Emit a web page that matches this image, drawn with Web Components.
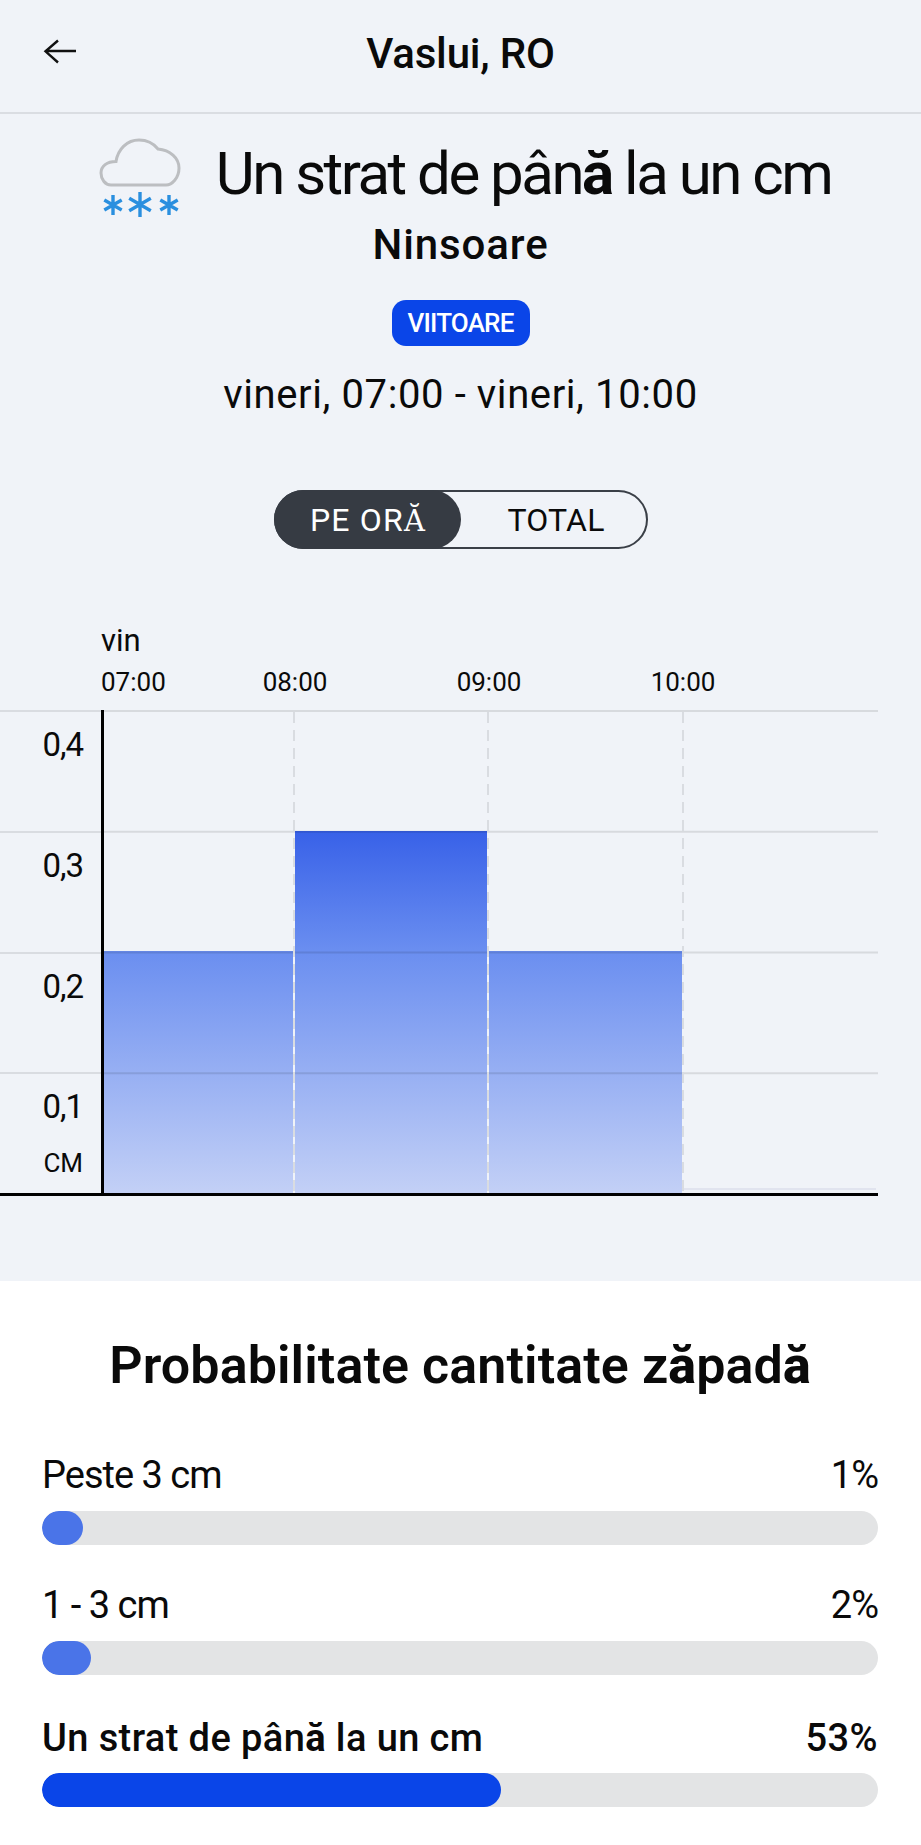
<!doctype html>
<html lang="ro">
<head>
<meta charset="utf-8">
<title>Vaslui, RO</title>
<style>
  html, body { margin: 0; padding: 0; }
  body { background: #f0f3f8; color: #0a0a0a; font-family: Roboto, "Liberation Sans", sans-serif; }
</style>
</head>
<body>
<weather-page>
  <app-header>Vaslui, RO</app-header>
  <alert-summary></alert-summary>
  <mode-toggle></mode-toggle>
  <snow-chart></snow-chart>
  <chance-panel>
    <chance-row label="Peste 3 cm" value="1%" fill="41"></chance-row>
    <chance-row label="1 - 3 cm" value="2%" fill="49"></chance-row>
    <chance-row label="Un strat de pân|ă| la un cm" value="53%" fill="459" active></chance-row>
  </chance-panel>
</weather-page>

<script>
(function () {
'use strict';

const makeTemplate = function (html) {
    let template = document.createElement('template');
    template.innerHTML = html;
    return template;
};

class ShadowBase extends HTMLElement {
    constructor() {
        super();
        this.attachShadow({ mode: 'open' }).appendChild(document.importNode(this.constructor.template.content, true));
    }
}

class WeatherPage extends ShadowBase {
    static get template() {
        return makeTemplate(`<style>
            :host{ display: flex; flex-direction: column; width: 100%; min-height: 1845px; }
        </style><slot></slot>`);
    }
}

class AppHeader extends ShadowBase {
    static get template() {
        return makeTemplate(`<style>
            :host{
                display: flex;
                align-items: center;
                justify-content: center;
                position: relative;
                box-sizing: border-box;
                height: 114px;
                padding-bottom: 6px;
                border-bottom: 2px solid #dadde2;
                font-size: 42px;
                font-weight: 500;
                letter-spacing: -0.2px;
            }
            svg{ position: absolute; left: 43px; top: 39px; }
        </style>
        <svg width="34" height="25" viewBox="0 0 34 25" fill="none" stroke="#111" stroke-width="2.4">
            <path d="M33 12H3M15 1.500L2.500 12.300L15 23.500"/>
        </svg>
        <slot></slot>`);
    }
}

class AlertSummary extends ShadowBase {
    static get template() {
        return makeTemplate(`<style>
            :host{ display: flex; flex-direction: column; align-items: center; padding-top: 22px; }
            .title{ display: flex; align-items: flex-start; gap: 35px; padding-left: 9px; }
            svg{ display: block; margin-top: 1px; }
            h1{ margin: 2px 0 0; font-size: 60px; line-height: 72px; font-weight: 400; letter-spacing: -2.5px; white-space: nowrap; }
            .fb{ font-weight: 700; }
            h2{ margin: 2px 0 0; font-size: 42px; line-height: 48px; font-weight: 500; letter-spacing: 0.9px; }
            .badge{
                margin-top: 31px;
                box-sizing: border-box;
                width: 138px;
                height: 46px;
                line-height: 46px;
                text-align: center;
                border-radius: 14px;
                background: #0a45e8;
                color: #fff;
                font-size: 26px;
                font-weight: 500;
                letter-spacing: -0.8px;
            }
            .dates{ margin-top: 25px; font-size: 40px; line-height: 48px; letter-spacing: 0.6px; }
        </style>
        <div class="title">
            <svg width="82" height="82" viewBox="0 0 82 82" fill="none">
                <path d="M12 48C6 48 2 42 2 36C2 29 8 24.500 17 24.500C19 12 28 3 40 3C49 3 55 7 59 12C71 13 80 21 80 31C80 41 73 48 67 48Z" stroke="#bcbec1" stroke-width="3"/>
                <g stroke="#2a8fdf" stroke-width="3.400">
                    <path d="M14 58V78M5.300 63L22.700 73M22.700 63L5.300 73"/>
                    <path d="M41 55V80M30.200 61.300L51.800 73.700M51.800 61.300L30.200 73.700"/>
                    <path d="M70 58V78M61.300 63L78.700 73M78.700 63L61.300 73"/>
                </g>
            </svg>
            <h1>Un strat de pân<span class="fb">ă</span> la un cm</h1>
        </div>
        <h2>Ninsoare</h2>
        <div class="badge">VIITOARE</div>
        <div class="dates">vineri, 07:00 - vineri, 10:00</div>`);
    }
}

class ModeToggle extends ShadowBase {
    static get template() {
        return makeTemplate(`<style>
            :host{
                display: flex;
                align-self: center;
                box-sizing: border-box;
                width: 374px;
                height: 59px;
                margin-top: 71px;
                border: 2px solid #3a3f47;
                border-radius: 30px;
                font-size: 32px;
                letter-spacing: 1.2px;
            }
            span{ display: flex; align-items: center; justify-content: center; flex: 0 0 50%; }
            .on{ margin: -2px 0 -2px -2px; padding-left: 2px; background: #363b43; color: #fff; border-radius: 30px; }
            .off{ padding-left: 6px; box-sizing: border-box; letter-spacing: 0.2px; }
            b{ font-weight: 400; }
            i{ font-style: normal; font-family: "DejaVu Serif", serif; font-size: 29px; }
        </style>
        <span class="on"><b>PE OR<i>Ă</i></b></span>
        <span class="off">TOTAL</span>`);
    }
}

class SnowChart extends ShadowBase {
    static get template() {
        return makeTemplate(`<style>
            :host{ display: block; width: 878px; margin-top: 74px; }
            .day{ padding-left: 101px; font-size: 31px; line-height: 36px; }
            .hours{
                display: grid;
                grid-template-columns: 194px 194px 194px;
                padding-left: 198px;
                margin: 7px 0 12px;
                position: relative;
                font-size: 26px;
                line-height: 32px;
                text-align: center;
            }
            .first{ position: absolute; left: 101px; top: 0; }
            .plot{ display: grid; grid-template-columns: 101px 777px; border-bottom: 3px solid #000; }
            .rows{ display: flex; flex-direction: column; }
            .row{
                box-sizing: border-box;
                height: 120.750px;
                padding: 15px 18px 0 0;
                border-top: 2px solid #d9dce1;
                text-align: right;
                font-size: 33px;
                letter-spacing: -1px;
                line-height: 36px;
            }
            .unit{ margin-top: 23px; font-size: 26px; line-height: 30px; letter-spacing: 0; }
            svg{ display: block; }
        </style>
        <div class="day">vin</div>
        <div class="hours"><span class="first">07:00</span><span>08:00</span><span>09:00</span><span>10:00</span></div>
        <div class="plot">
            <div class="rows">
                <div class="row">0,4</div>
                <div class="row">0,3</div>
                <div class="row">0,2</div>
                <div class="row">0,1<div class="unit">CM</div></div>
            </div>
            <svg width="777" height="483" viewBox="0 0 777 483">
                <defs>
                    <linearGradient id="snow" gradientUnits="userSpaceOnUse" x1="0" y1="121" x2="0" y2="483">
                        <stop offset="0" stop-color="#3861e8"/>
                        <stop offset="0.33" stop-color="#6a8ef0"/>
                        <stop offset="1" stop-color="#c3d0f6"/>
                    </linearGradient>
                </defs>
                <rect x="2" y="241" width="190" height="242" fill="url(#snow)"/>
                <rect x="194" y="121" width="192" height="362" fill="url(#snow)"/>
                <rect x="388" y="241" width="193" height="242" fill="url(#snow)"/>
                <path d="M582 479H775" stroke="#e1e4ef" stroke-width="2"/>
                <g stroke="#000" stroke-opacity="0.1" stroke-width="2">
                    <path d="M0 1H777M0 121.750H777M0 242.500H777M0 363.250H777"/>
                </g>
                <g stroke="#d9dce1" stroke-width="2" stroke-dasharray="11 7">
                    <path d="M193 2V483M387 2V483M582 2V483"/>
                </g>
                <path d="M1.500 0V483" stroke="#000" stroke-width="3"/>
            </svg>
        </div>`);
    }
}

class ChancePanel extends ShadowBase {
    static get template() {
        return makeTemplate(`<style>
            :host{ display: block; flex: 1 1 auto; margin-top: 85px; padding: 54px 43px 0 42px; background: #fff; }
            h2{ margin: 0 0 18px; text-align: center; font-size: 52px; line-height: 62px; font-weight: 600; letter-spacing: 0.1px; white-space: nowrap; }
            .fb{ font-weight: 800; }
        </style>
        <h2>Probabilitate cantitate z<span class="fb">ă</span>pad<span class="fb">ă</span></h2>
        <slot></slot>`);
    }
}

class ChanceRow extends ShadowBase {
    static get template() {
        return makeTemplate(`<style>
            :host{ display: block; padding-top: 38px; }
            .top{ display: flex; justify-content: space-between; font-size: 38px; letter-spacing: -1px; line-height: 44px; }
            .fb{ font-weight: 700; }
            .track{ height: 34px; margin-top: 14px; border-radius: 17px; background: #e3e4e5; overflow: hidden; }
            .fill{ height: 100%; border-radius: 17px; background: #4a74e8; }
            :host([active]){ padding-top: 41px; }
            :host([active]) .top{ font-weight: 500; letter-spacing: 0.4px; }
            :host([active]) .track{ margin-top: 13px; }
            :host([active]) .fill{ background: #0a45e8; }
        </style>
        <div class="top"><span class="label"></span><span class="value"></span></div>
        <div class="track"><div class="fill"></div></div>`);
    }
    connectedCallback() {
        let parts = this.getAttribute('label').split('|');
        let label = this.shadowRoot.querySelector('.label');
        parts.forEach(function (part, index) {
            let node = document.createElement('span');
            if (index === 1) node.className = 'fb';
            node.textContent = part;
            label.appendChild(node);
        });
        this.shadowRoot.querySelector('.value').textContent = this.getAttribute('value');
        this.shadowRoot.querySelector('.fill').style.width = this.getAttribute('fill') + 'px';
    }
}

window.customElements.define('weather-page', WeatherPage);
window.customElements.define('app-header', AppHeader);
window.customElements.define('alert-summary', AlertSummary);
window.customElements.define('mode-toggle', ModeToggle);
window.customElements.define('snow-chart', SnowChart);
window.customElements.define('chance-panel', ChancePanel);
window.customElements.define('chance-row', ChanceRow);

}());
</script>
</body>
</html>
